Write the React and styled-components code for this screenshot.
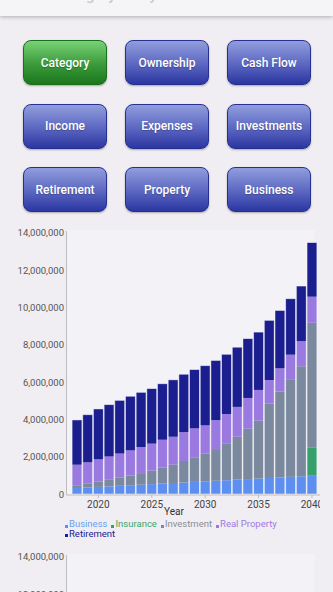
import React from "react";
import styled, { createGlobalStyle } from "styled-components";

const GlobalStyle = createGlobalStyle`
  html, body {
    margin: 0;
    padding: 0;
    background: #f0eef2;
    font-family: Roboto, "Liberation Sans", sans-serif;
  }
`;

const YEARS = Array.from({ length: 23 }, (_, i) => 2018 + i);

const SERIES = [
  {
    name: "Business",
    color: "#5d8ff0",
    text: "#6d9ef5",
    values: YEARS.map((_, i) => 0.32 + i * (0.66 / 22)),
  },
  {
    name: "Insurance",
    color: "#36a06c",
    text: "#3ca66e",
    values: YEARS.map((y) => (y === 2040 ? 1.5 : 0)),
  },
  {
    name: "Investment",
    color: "#7a899d",
    text: "#8a909a",
    values: [
      0.15, 0.2, 0.28, 0.35, 0.43, 0.52, 0.62, 0.72, 0.85, 0.98, 1.15, 1.32,
      1.5, 1.7, 1.95, 2.3, 2.7, 3.1, 4.0, 4.6, 5.2, 5.9, 6.7,
    ],
  },
  {
    name: "Real Property",
    color: "#9a79e0",
    text: "#9b7be0",
    values: [
      1.1, 1.15, 1.2, 1.25, 1.3, 1.35, 1.4, 1.45, 1.5, 1.5, 1.55, 1.55, 1.5,
      1.55, 1.6, 1.6, 1.65, 1.65, 1.25, 1.25, 1.35, 1.35, 1.4,
    ],
  },
  {
    name: "Retirement",
    color: "#1a1e8e",
    text: "#1c2190",
    values: [
      2.4, 2.55, 2.7, 2.78, 2.85, 2.9, 2.93, 2.95, 3.0, 3.05, 3.1, 3.15, 3.2,
      3.2, 3.2, 3.2, 3.18, 3.1, 3.2, 3.1, 3.0, 2.95, 2.9,
    ],
  },
];

const BUTTONS = [
  { label: "Category", active: true },
  { label: "Ownership" },
  { label: "Cash Flow" },
  { label: "Income" },
  { label: "Expenses" },
  { label: "Investments" },
  { label: "Retirement" },
  { label: "Property" },
  { label: "Business" },
];

// chart geometry (svg coords)
const ZERO_Y = 272;
const PX_PER_M = 18.65;
const AXIS_X = 66.5;
const FIRST_X = 77;
const STEP = 10.68;
const BAR_W = 9.8;

const Page = styled.div`
  width: 333px;
  overflow: hidden;
`;

const Header = styled.header`
  height: 16px;
  background: #f5f4f7;
  box-shadow: 0 1px 4px rgba(0, 0, 0, 0.28);
  display: flex;
  align-items: flex-end;
  padding: 0 0 12px 55px;
  box-sizing: border-box;
  overflow: hidden;
`;

const Title = styled.h1`
  margin: 0;
  font-size: 15px;
  line-height: 18px;
  font-weight: 500;
  color: #c9c8cc;
  white-space: nowrap;
`;

const ButtonGrid = styled.div`
  display: grid;
  grid-template-columns: repeat(3, 84px);
  grid-auto-rows: 45px;
  column-gap: 18px;
  row-gap: 18.5px;
  padding: 24px 0 0 23px;
`;

const TabButton = styled.button`
  border-radius: 8px;
  border: 1px solid ${(p) => (p.$active ? "#1a6e1c" : "#27308f")};
  background: ${(p) =>
    p.$active
      ? "linear-gradient(to bottom, #78d277 0%, #3a9a3a 55%, #1b771d 100%)"
      : "linear-gradient(to bottom, #919ddd 0%, #5a66c0 55%, #2c36a2 100%)"};
  box-shadow: 0 1px 2px rgba(0, 0, 0, 0.3);
  color: #fff;
  font-family: Roboto, "Liberation Sans", sans-serif;
  font-size: 12px;
  font-weight: 500;
  text-shadow: 0 1px 1px rgba(0, 0, 0, 0.25);
  padding: 0;
  cursor: pointer;
`;

const ChartBlock = styled.section`
  display: flex;
  flex-direction: column;
  margin-top: ${(p) => p.$top}px;
`;

const ChartSvg = styled.svg`
  display: block;
  width: 320px;
  height: 294px;
  overflow: hidden;
`;

const Legend = styled.div`
  display: flex;
  flex-wrap: wrap;
  column-gap: 4px;
  width: 245px;
  padding: 3px 0 0 65px;
  font-size: 9.5px;
  line-height: 9.5px;
`;

const LegendItem = styled.span`
  color: ${(p) => p.$color};
  white-space: nowrap;
  display: inline-flex;
  align-items: flex-end;
`;

const Dot = styled.i`
  display: inline-block;
  width: 3px;
  height: 3px;
  margin: 0 1px 1px 0;
  background: ${(p) => p.$color};
`;

function Chart({ top, scale = 1 }) {
  const ticks = [0, 2, 4, 6, 8, 10, 12, 14];
  return (
    <ChartBlock $top={top}>
      <ChartSvg viewBox="0 0 320 294">
        <rect x={AXIS_X} y={8} width={248} height={ZERO_Y - 8} fill="#f3f2f6" />
        {ticks.map((t) => (
          <text
            key={t}
            x={64}
            y={ZERO_Y - t * PX_PER_M + 3.5}
            fontSize="9.5"
            fill="#555"
            textAnchor="end"
          >
            {t === 0 ? "0" : (t * 1000000).toLocaleString("en-US")}
          </text>
        ))}
        {YEARS.map((year, i) => {
          const cx = FIRST_X + i * STEP;
          let acc = 0;
          const segs = SERIES.map((s) => {
            const v = s.values[i] * scale;
            const y = ZERO_Y - (acc + v) * PX_PER_M;
            acc += v;
            return v > 0 ? (
              <rect
                key={s.name}
                x={cx - BAR_W / 2}
                y={y}
                width={BAR_W}
                height={v * PX_PER_M}
                fill={s.color}
              />
            ) : null;
          });
          return (
            <g key={year}>
              {segs}
              <rect
                x={cx - BAR_W / 2}
                y={ZERO_Y - acc * PX_PER_M}
                width={BAR_W}
                height={acc * PX_PER_M}
                fill="none"
                stroke="#ffffff"
                strokeOpacity="0.55"
                strokeWidth="0.8"
              />
            </g>
          );
        })}
        <line x1={AXIS_X} y1={9} x2={AXIS_X} y2={ZERO_Y + 1} stroke="#bdbcc2" strokeWidth="1" />
        <line x1={AXIS_X} y1={ZERO_Y + 1} x2={320} y2={ZERO_Y + 1} stroke="#bdbcc2" strokeWidth="1" />
        {[2020, 2025, 2030, 2035, 2040].map((y) => {
          const x = FIRST_X + (y - 2018) * STEP;
          return (
            <g key={y}>
              <line x1={x} y1={ZERO_Y + 1} x2={x} y2={ZERO_Y + 4} stroke="#bdbcc2" />
              <text x={x} y={ZERO_Y + 14} fontSize="10" fill="#444" textAnchor="middle">
                {y}
              </text>
            </g>
          );
        })}
        <text x={174} y={ZERO_Y + 21} fontSize="10" fill="#333" textAnchor="middle">
          Year
        </text>
      </ChartSvg>
      <Legend>
        {SERIES.map((s) => (
          <LegendItem key={s.name} $color={s.text}>
            <Dot $color={s.color} />
            {s.name}
          </LegendItem>
        ))}
      </Legend>
    </ChartBlock>
  );
}

export default function App() {
  return (
    <Page>
      <GlobalStyle />
      <Header>
        <Title>Category Analysis</Title>
      </Header>
      <ButtonGrid>
        {BUTTONS.map((b) => (
          <TabButton key={b.label} $active={b.active}>
            {b.label}
          </TabButton>
        ))}
      </ButtonGrid>
      <Chart top={10} />
      <Chart top={8} scale={0.7} />
    </Page>
  );
}
